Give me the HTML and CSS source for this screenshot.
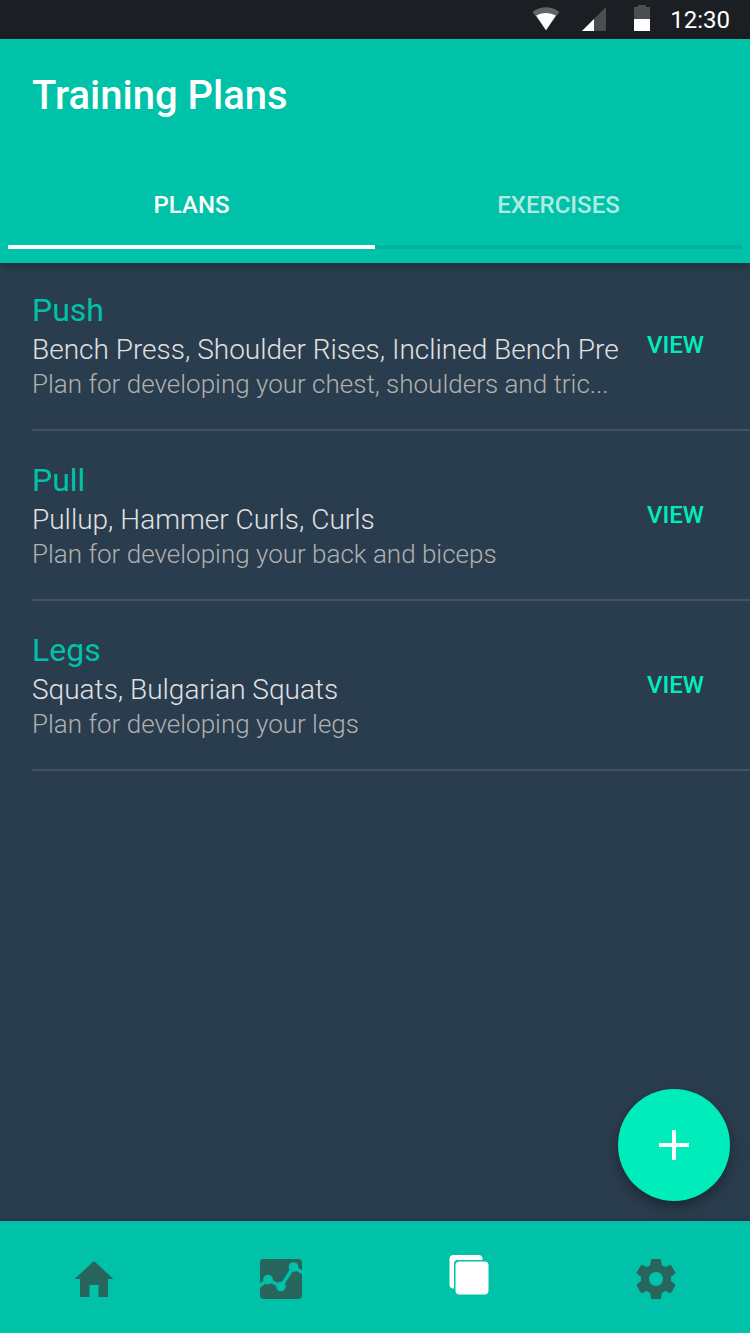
FILE: index.html
```html
<!DOCTYPE html>
<html lang="en">
<head>
<meta charset="utf-8">
<meta name="viewport" content="width=device-width, initial-scale=1">
<title>Training Plans</title>
<link rel="stylesheet" href="styles.css">
</head>
<body class="app">
<div class="status-bar">
  <svg class="wifi" width="28" height="26" viewBox="0 0 28 26" aria-hidden="true">
    <path class="dim-arc" d="M0.6 7C8.500 0.8 19.500 0.8 27.400 7L14 25.200Z"/>
    <path class="lit" d="M4.200 10.500C10 7 18 7 23.800 10.500L14 25.200Z"/>
  </svg>
  <svg class="signal" width="24" height="26" viewBox="0 0 24 26" aria-hidden="true">
    <path class="dim" d="M24 2V26H0Z"/>
    <path class="lit" d="M12 14V26H0Z"/>
  </svg>
  <svg class="battery" width="16" height="26" viewBox="0 0 16 26" aria-hidden="true">
    <path class="dim" d="M4 0H12V2H16V14H0V2H4Z"/>
    <path class="lit" d="M0 14H16V26H0Z"/>
  </svg>
  <span class="clock">12:30</span>
</div>
<header class="header">
  <h1 class="title">Training Plans</h1>
  <div class="tabs" role="tablist">
    <button class="tab tab-active" type="button" role="tab" aria-selected="true">PLANS</button>
    <button class="tab" type="button" role="tab" aria-selected="false">EXERCISES</button>
  </div>
</header>
<main class="content">
  <ul class="plans">
    <li class="plan">
      <div class="plan-text">
        <h2 class="plan-name">Push</h2>
        <p class="plan-exercises">Bench Press, Shoulder Rises, Inclined Bench Pre</p>
        <p class="plan-about">Plan for developing your chest, shoulders and tric...</p>
      </div>
      <button class="view" type="button" aria-label="VIEW Push">VIEW</button>
    </li>
    <li class="plan">
      <div class="plan-text">
        <h2 class="plan-name">Pull</h2>
        <p class="plan-exercises">Pullup, Hammer Curls, Curls</p>
        <p class="plan-about">Plan for developing your back and biceps</p>
      </div>
      <button class="view" type="button" aria-label="VIEW Pull">VIEW</button>
    </li>
    <li class="plan">
      <div class="plan-text">
        <h2 class="plan-name">Legs</h2>
        <p class="plan-exercises">Squats, Bulgarian Squats</p>
        <p class="plan-about">Plan for developing your legs</p>
      </div>
      <button class="view" type="button" aria-label="VIEW Legs">VIEW</button>
    </li>
  </ul>
  <button class="fab" type="button" aria-label="Add plan">
    <svg width="30" height="30" viewBox="0 0 30 30" aria-hidden="true"><path d="M13 0H17V13H30V17H17V30H13V17H0V13H13Z"/></svg>
  </button>
</main>
<nav class="nav">
  <a class="nav-item" href="#home" aria-label="Home">
    <svg width="48" height="48" viewBox="0 0 48 48" aria-hidden="true"><path d="M24 8L43.500 26H38V44H28.500V32H19.500V44H10V26H4.500Z"/></svg>
  </a>
  <a class="nav-item" href="#progress" aria-label="Progress">
    <svg width="48" height="48" viewBox="0 0 48 48" aria-hidden="true">
      <rect x="3" y="6" width="42" height="40" rx="4"/>
      <path class="graph-line" d="M1 34L11 26.500L24 33.500L36.500 14L47 20.500"/>
      <circle class="graph-dot" cx="11" cy="26.500" r="4.800"/>
      <circle class="graph-dot" cx="24" cy="33.500" r="4.800"/>
      <circle class="graph-dot" cx="36.500" cy="14" r="4.800"/>
    </svg>
  </a>
  <a class="nav-item nav-active" href="#plans" aria-label="Plans" aria-current="page">
    <svg width="48" height="48" viewBox="0 0 48 48" aria-hidden="true">
      <rect x="4.500" y="2" width="33" height="33.500" rx="4"/>
      <rect class="card-gap" x="9" y="7" width="36" height="36" rx="4"/>
      <rect x="10.500" y="8.500" width="33" height="33" rx="4"/>
    </svg>
  </a>
  <a class="nav-item" href="#settings" aria-label="Settings">
    <svg width="48" height="48" viewBox="0 -1 24 24" aria-hidden="true"><path d="M19.430 12.980c.04-.32.07-.64.07-.98s-.03-.66-.07-.98l2.110-1.650c.19-.15.24-.42.12-.64l-2-3.460c-.12-.22-.39-.3-.61-.22l-2.490 1c-.52-.4-1.080-.73-1.690-.98l-.38-2.650C14.460 2.180 14.250 2 14 2h-4c-.25 0-.46.18-.49.42l-.38 2.650c-.61.25-1.170.59-1.690.98l-2.490-1c-.23-.09-.49 0-.61.22l-2 3.460c-.13.22-.07.49.12.64l2.110 1.650c-.04.32-.07.65-.07.98s.03.66.07.98l-2.110 1.650c-.19.15-.24.42-.12.64l2 3.460c.12.22.39.3.61.22l2.490-1c.52.4 1.080.73 1.690.98l.38 2.650c.03.24.24.42.49.42h4c.25 0 .46-.18.49-.42l.38-2.650c.61-.25 1.170-.59 1.690-.98l2.490 1c.23.09.49 0 .61-.22l2-3.460c.12-.22.07-.49-.12-.64l-2.110-1.650zM12 15.500c-1.930 0-3.500-1.570-3.500-3.500s1.570-3.500 3.500-3.500 3.500 1.570 3.500 3.500-1.570 3.500-3.500 3.500z"/></svg>
  </a>
</nav>
</body>
</html>
```

FILE: styles.css
```css
* {
  box-sizing: border-box;
}

.app {
  display: flex;
  flex-direction: column;
  min-height: 100vh;
  margin: 0;
  background: #2a3d4e;
  color: #fff;
  font-family: Roboto, "Liberation Sans", sans-serif;
}

button {
  border: 0;
  padding: 0;
  background: none;
  font: inherit;
  cursor: pointer;
}

.status-bar {
  display: flex;
  align-items: center;
  justify-content: flex-end;
  height: 39px;
  padding: 0 20px;
  background: #1b1e23;
}

.status-bar svg {
  margin-bottom: 3px;
}

.dim {
  fill: #4b4d51;
}

.dim-arc {
  fill: #626467;
}

.lit {
  fill: #fff;
}

.wifi {
  margin-right: 22px;
}

.signal {
  margin-right: 28px;
}

.battery {
  margin-right: 20px;
}

.clock {
  font-size: 24px;
  line-height: 28px;
}

.header {
  position: relative;
  padding: 33px 8px 14px;
  background: #00c2a8;
  box-shadow: 0 2px 8px rgba(0, 0, 0, 0.35);
}

.title {
  margin: 0 24px 45px;
  font-size: 40px;
  font-weight: 500;
  line-height: 48px;
}

.tabs {
  display: flex;
}

.tab {
  flex: 1;
  height: 84px;
  border-bottom: 4px solid #00b49c;
  color: rgba(255, 255, 255, 0.7);
  font-size: 24px;
  font-weight: 500;
  line-height: 28px;
}

.tab-active {
  border-color: #fff;
  color: #fff;
}

.content {
  position: relative;
  flex: 1;
}

.plans {
  margin: 0;
  padding: 0 0 0 32px;
  list-style: none;
}

.plan {
  display: flex;
  align-items: center;
  gap: 28px;
  padding: 30px 46px 30px 0;
  border-bottom: 2px solid #40525f;
}

.plan:first-child {
  padding-top: 28px;
}

.plan-text {
  flex: 1;
  min-width: 0;
  padding-bottom: 2px;
}

.plan-name,
.plan-exercises,
.plan-about {
  margin: 0;
  overflow: hidden;
  white-space: nowrap;
}

.plan-name {
  color: #00c2a8;
  font-size: 32px;
  font-weight: 400;
  line-height: 38px;
}

.plan-exercises {
  color: #e0e0e0;
  font-size: 28px;
  font-weight: 300;
  line-height: 42px;
}

.plan-about {
  overflow: visible;
  color: #b0b0b0;
  font-size: 26px;
  font-weight: 300;
  line-height: 26px;
}

.view {
  color: #00edbb;
  font-size: 24px;
  font-weight: 500;
  line-height: 28px;
}

.fab {
  position: absolute;
  right: 20px;
  bottom: 20px;
  display: flex;
  align-items: center;
  justify-content: center;
  width: 112px;
  height: 112px;
  border-radius: 50%;
  background: #00edbb;
  box-shadow: 0 6px 14px rgba(0, 0, 0, 0.35);
  fill: #fff;
}

.nav {
  display: flex;
  position: relative;
  height: 112px;
  background: #00c2a8;
  box-shadow: 0 0 4px rgba(0, 0, 0, 0.3);
}

.nav-item {
  display: flex;
  flex: 1;
  align-items: center;
  justify-content: center;
  fill: #28655d;
}

.nav-active {
  fill: #fff;
}

.graph-line {
  fill: none;
  stroke: #00c2a8;
  stroke-width: 3.5;
}

.graph-dot,
.card-gap {
  fill: #00c2a8;
}
```
